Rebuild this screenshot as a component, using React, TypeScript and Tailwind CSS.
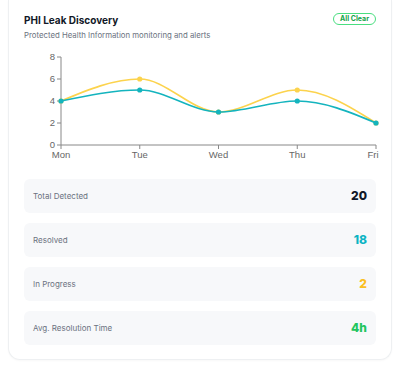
import React from 'react';

type Pt = [number, number];

const days = ['Mon', 'Tue', 'Wed', 'Thu', 'Fri'];
const detected = [4, 6, 3, 5, 2];
const resolved = [4, 5, 3, 4, 2];

const stats = [
  { label: 'Total Detected', value: '20', color: 'text-[#111827]' },
  { label: 'Resolved', value: '18', color: 'text-[#0cb4c4]' },
  { label: 'In Progress', value: '2', color: 'text-[#fbbf24]' },
  { label: 'Avg. Resolution Time', value: '4h', color: 'text-[#22c55e]' },
];

// chart geometry (svg coords)
const X0 = 37;
const STEP = 78.75;
const Y0 = 101;
const UNIT = 11;
const px = (i: number) => X0 + i * STEP;
const py = (v: number) => Y0 - v * UNIT;

const sign = (n: number) => (n < 0 ? -1 : 1);

// monotone-x cubic, same as d3 curveMonotoneX
function monotonePath(pts: Pt[]) {
  const n = pts.length;
  const m: number[] = new Array(n).fill(0);
  for (let i = 1; i < n - 1; i++) {
    const [x0, y0] = pts[i - 1];
    const [x1, y1] = pts[i];
    const [x2, y2] = pts[i + 1];
    const h0 = x1 - x0;
    const h1 = x2 - x1;
    const s0 = (y1 - y0) / h0;
    const s1 = (y2 - y1) / h1;
    const p = (s0 * h1 + s1 * h0) / (h0 + h1);
    m[i] = (sign(s0) + sign(s1)) * Math.min(Math.abs(s0), Math.abs(s1), 0.5 * Math.abs(p)) || 0;
  }
  {
    const h = pts[1][0] - pts[0][0];
    m[0] = (3 * (pts[1][1] - pts[0][1]) / h - m[1]) / 2;
    const h2 = pts[n - 1][0] - pts[n - 2][0];
    m[n - 1] = (3 * (pts[n - 1][1] - pts[n - 2][1]) / h2 - m[n - 2]) / 2;
  }
  let d = `M${pts[0][0]},${pts[0][1]}`;
  for (let i = 0; i < n - 1; i++) {
    const [x0, y0] = pts[i];
    const [x1, y1] = pts[i + 1];
    const dx = (x1 - x0) / 3;
    d += `C${x0 + dx},${y0 + dx * m[i]},${x1 - dx},${y1 - dx * m[i + 1]},${x1},${y1}`;
  }
  return d;
}

const Chart: React.FC = () => {
  const yellow = detected.map((v, i) => [px(i), py(v)] as Pt);
  const teal = resolved.map((v, i) => [px(i), py(v)] as Pt);
  return (
    <svg width={354} height={124} className="block overflow-visible" style={{ fontFamily: '"Liberation Sans", Arial, sans-serif' }}>
      {/* y axis */}
      <line x1={X0} y1={py(8)} x2={X0} y2={Y0} stroke="#888" strokeWidth={1} />
      {[0, 2, 4, 6, 8].map((v) => (
        <g key={v}>
          <line x1={X0 - 4} y1={py(v)} x2={X0} y2={py(v)} stroke="#888" />
          <text x={X0 - 6} y={py(v) + 3} textAnchor="end" fontSize={9.5} fill="#666">
            {v}
          </text>
        </g>
      ))}
      {/* x axis */}
      <line x1={X0} y1={Y0} x2={px(4)} y2={Y0} stroke="#888" strokeWidth={1} />
      {days.map((d, i) => (
        <g key={d}>
          <line x1={px(i)} y1={Y0} x2={px(i)} y2={Y0 + 4} stroke="#888" />
          <text x={i === 4 ? px(i) - 3 : px(i)} y={Y0 + 13} textAnchor="middle" fontSize={9.5} fill="#666">
            {d}
          </text>
        </g>
      ))}
      <path d={monotonePath(yellow)} fill="none" stroke="#fcd34d" strokeWidth={1.6} />
      {yellow.map(([x, y], i) => (
        <circle key={i} cx={x} cy={y} r={2.6} fill="#fcd34d" />
      ))}
      <path d={monotonePath(teal)} fill="none" stroke="#14b4be" strokeWidth={1.6} />
      {teal.map(([x, y], i) => (
        <circle key={i} cx={x} cy={y} r={2.6} fill="#14b4be" />
      ))}
    </svg>
  );
};

export default function App() {
  return (
    <div className="min-h-screen bg-white px-2 pb-[6px]" style={{ fontFamily: 'Inter, "Noto Sans", sans-serif' }}>
      <div className="rounded-b-xl border-x border-b border-[#eef0f2] bg-white px-[15px] pt-3 pb-[14px] shadow-[0_1px_2px_rgba(0,0,0,0.03)]">
        <div className="flex items-start justify-between">
          <div>
            <h2 className="text-[10px] leading-4 font-bold text-[#111827]">PHI Leak Discovery</h2>
            <p className="mt-[1px] text-[7.8px] leading-3 text-[#6b7280]">
              Protected Health Information monitoring and alerts
            </p>
          </div>
          <span className="mt-[1px] flex h-3 items-center rounded-full border border-[#4ade80] bg-white px-[6px] text-[7px] font-bold text-[#16a34a]">
            All Clear
          </span>
        </div>

        <div className="mt-[3px]">
          <Chart />
        </div>

        <div className="mt-[11px] flex flex-col gap-[10px]">
          {stats.map((s) => (
            <div key={s.label} className="flex h-[34px] items-center justify-between rounded-md bg-[#f7f8fa] px-[9px]">
              <span className="text-[8px] text-[#6b7280]">{s.label}</span>
              <span className={`text-[12px] font-extrabold ${s.color}`}>{s.value}</span>
            </div>
          ))}
        </div>
      </div>
    </div>
  );
}
